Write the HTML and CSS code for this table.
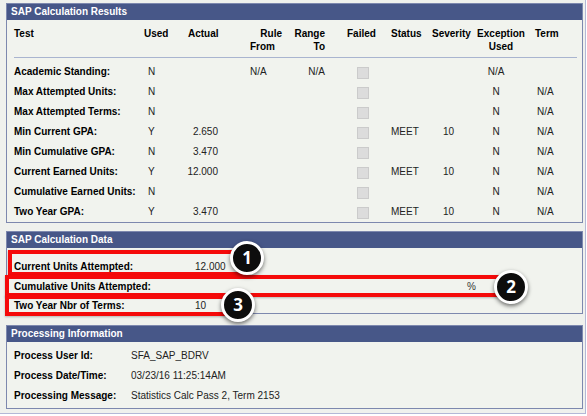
FILE: index.html
```html
<!DOCTYPE html>
<html>
<head>
<meta charset="utf-8">
<link rel="stylesheet" href="styles.css">
</head>
<body>
<div class="page">
  <section class="panel results">
    <div class="panel-head">SAP Calculation Results</div>
    <div class="grid head-row">
      <div class="c-test">Test</div>
      <div class="c-used">Used</div>
      <div class="c-actual">Actual</div>
      <div class="c-rule"><div class="rule1">Rule</div><div class="rule2">From</div></div>
      <div class="c-range">Range<br>To</div>
      <div class="c-failed">Failed</div>
      <div class="c-status">Status</div>
      <div class="c-sev">Severity</div>
      <div class="c-exc">Exception<br>Used</div>
      <div class="c-term">Term</div>
    </div>
    <div class="rows">
      <div class="grid row">
        <div class="c-test lbl">Academic Standing:</div>
        <div class="c-used v">N</div>
        <div class="c-actual v"></div>
        <div class="c-rule v">N/A</div>
        <div class="c-range v">N/A</div>
        <div class="c-failed"><span class="cb"></span></div>
        <div class="c-status v"></div>
        <div class="c-sev v"></div>
        <div class="c-exc v">N/A</div>
        <div class="c-term v"></div>
      </div>
      <div class="grid row">
        <div class="c-test lbl">Max Attempted Units:</div>
        <div class="c-used v">N</div>
        <div class="c-actual v"></div>
        <div class="c-rule v"></div>
        <div class="c-range v"></div>
        <div class="c-failed"><span class="cb"></span></div>
        <div class="c-status v"></div>
        <div class="c-sev v"></div>
        <div class="c-exc v">N</div>
        <div class="c-term v">N/A</div>
      </div>
      <div class="grid row">
        <div class="c-test lbl">Max Attempted Terms:</div>
        <div class="c-used v">N</div>
        <div class="c-actual v"></div>
        <div class="c-rule v"></div>
        <div class="c-range v"></div>
        <div class="c-failed"><span class="cb"></span></div>
        <div class="c-status v"></div>
        <div class="c-sev v"></div>
        <div class="c-exc v">N</div>
        <div class="c-term v">N/A</div>
      </div>
      <div class="grid row">
        <div class="c-test lbl">Min Current GPA:</div>
        <div class="c-used v">Y</div>
        <div class="c-actual v">2.650</div>
        <div class="c-rule v"></div>
        <div class="c-range v"></div>
        <div class="c-failed"><span class="cb"></span></div>
        <div class="c-status v">MEET</div>
        <div class="c-sev v">10</div>
        <div class="c-exc v">N</div>
        <div class="c-term v">N/A</div>
      </div>
      <div class="grid row">
        <div class="c-test lbl">Min Cumulative GPA:</div>
        <div class="c-used v">N</div>
        <div class="c-actual v">3.470</div>
        <div class="c-rule v"></div>
        <div class="c-range v"></div>
        <div class="c-failed"><span class="cb"></span></div>
        <div class="c-status v"></div>
        <div class="c-sev v"></div>
        <div class="c-exc v">N</div>
        <div class="c-term v">N/A</div>
      </div>
      <div class="grid row">
        <div class="c-test lbl">Current Earned Units:</div>
        <div class="c-used v">Y</div>
        <div class="c-actual v">12.000</div>
        <div class="c-rule v"></div>
        <div class="c-range v"></div>
        <div class="c-failed"><span class="cb"></span></div>
        <div class="c-status v">MEET</div>
        <div class="c-sev v">10</div>
        <div class="c-exc v">N</div>
        <div class="c-term v">N/A</div>
      </div>
      <div class="grid row">
        <div class="c-test lbl">Cumulative Earned Units:</div>
        <div class="c-used v">N</div>
        <div class="c-actual v"></div>
        <div class="c-rule v"></div>
        <div class="c-range v"></div>
        <div class="c-failed"><span class="cb"></span></div>
        <div class="c-status v"></div>
        <div class="c-sev v"></div>
        <div class="c-exc v">N</div>
        <div class="c-term v">N/A</div>
      </div>
      <div class="grid row">
        <div class="c-test lbl">Two Year GPA:</div>
        <div class="c-used v">Y</div>
        <div class="c-actual v">3.470</div>
        <div class="c-rule v"></div>
        <div class="c-range v"></div>
        <div class="c-failed"><span class="cb"></span></div>
        <div class="c-status v">MEET</div>
        <div class="c-sev v">10</div>
        <div class="c-exc v">N</div>
        <div class="c-term v">N/A</div>
      </div>
    </div>
  </section>

  <section class="panel data">
    <div class="panel-head">SAP Calculation Data</div>
    <div class="data-body">
      <div class="drow"><div class="dlbl">Current Units Attempted:</div><div class="dval">12.000</div></div>
      <div class="drow"><div class="dlbl">Cumulative Units Attempted:</div><div class="dval"></div><div class="dpct">%</div></div>
      <div class="drow"><div class="dlbl">Two Year Nbr of Terms:</div><div class="dval">10</div></div>
    </div>
    <div class="box box1"></div>
    <div class="box box2"></div>
    <div class="box box3"></div>
    <div class="badge b1">1</div>
    <div class="badge b2">2</div>
    <div class="badge b3">3</div>
  </section>

  <section class="panel proc">
    <div class="panel-head">Processing Information</div>
    <div class="proc-body">
      <div class="prow"><div class="plbl">Process User Id:</div><div class="pval">SFA_SAP_BDRV</div></div>
      <div class="prow"><div class="plbl">Process Date/Time:</div><div class="pval">03/23/16 11:25:14AM</div></div>
      <div class="prow"><div class="plbl">Processing Message:</div><div class="pval">Statistics Calc Pass 2, Term 2153</div></div>
    </div>
  </section>
</div>
</body>
</html>
```

FILE: styles.css
```css
html, body {
  margin: 0;
  padding: 0;
  background: #ffffff;
}
body {
  font-family: "Liberation Sans", Arial, sans-serif;
  font-size: 10px;
  color: #000;
}
.page {
  width: 579px;
  height: 410px;
  padding: 3px 0 0 6px;
  background: #eff1ed;
  border-right: 1px solid #b3b8d6;
  border-bottom: 1px solid #b3b8d6;
}
.panel {
  position: relative;
  width: 575px;
  background: #f1f3ee;
  border: 1px solid #7d88ae;
}
.panel-head {
  height: 16px;
  line-height: 16px;
  background: #475788;
  color: #fff;
  font-weight: bold;
  font-size: 10px;
  padding-left: 4px;
}
.grid {
  display: grid;
  grid-template-columns: 126px 40px 50px 60px 45px 50px 40px 47px 58px 1fr;
}
.head-row {
  margin: 0 5px 0 7px;
  padding: 7px 0 4px 0;
  line-height: 13px;
  font-weight: bold;
  border-bottom: 1px solid #a9b4cf;
}
.rows {
  margin-top: 4px;
  padding-left: 7px;
}
.row {
  height: 20px;
  line-height: 20px;
  align-items: center;
}
.lbl { font-weight: bold; }
.v { color: #222; }

.head-row .c-used { padding-left: 4px; }
.row .c-used { padding-left: 8px; }
.head-row .c-actual { padding-left: 8px; }
.row .c-actual { text-align: right; padding-right: 12px; }
.rule1 { text-align: right; padding-right: 8px; }
.rule2 { padding-left: 20px; }
.row .c-rule { padding-left: 20px; }
.c-range { text-align: right; padding-right: 10px; }
.head-row .c-failed { padding-left: 12px; }
.row .c-failed { padding-left: 22px; display: flex; align-items: center; height: 20px; }
.cb {
  display: block;
  width: 10px;
  height: 10px;
  margin-top: 2px;
  background: #dcdcdc;
  border: 1px solid #cbcbcb;
}
.c-status { padding-left: 6px; }
.head-row .c-sev { padding-left: 7px; }
.row .c-sev { padding-left: 18px; }
.head-row .c-exc { text-align: center; }
.row .c-exc { text-align: center; padding-right: 10px; }
.head-row .c-term { padding-left: 5px; }
.row .c-term { padding-left: 7px; }

.data-body {
  padding: 12px 0 0 7px;
  display: flex;
  flex-direction: column;
  gap: 5.5px;
}
.drow {
  display: flex;
  height: 14px;
  line-height: 14px;
}
.dlbl { width: 181px; font-weight: bold; }
.dval { width: 272px; color: #222; }
.dpct { color: #333; }

.proc-body {
  padding: 7px 0 5px 7px;
  display: flex;
  flex-direction: column;
  gap: 6px;
}
.prow {
  display: flex;
  height: 14px;
  line-height: 14px;
}
.plbl { width: 117px; font-weight: bold; }
.pval { color: #222; }

.data { margin-top: 8px; }
.proc { margin-top: 11px; }

.box {
  position: absolute;
  border: 4px solid #f50a0a;
  box-shadow: 0 1px 2px rgba(0,0,0,0.25);
}
.box1 { left: 1px; top: 18px; width: 230px; height: 18px; }
.box2 { left: -2px; top: 43px; width: 494px; height: 14px; }
.box3 { left: -2px; top: 63px; width: 220px; height: 13px; }

.badge {
  position: absolute;
  width: 28px;
  height: 28px;
  line-height: 28px;
  border-radius: 50%;
  background: #0d0d0d;
  border: 3px solid #fff;
  box-shadow: 0 2px 4px rgba(0,0,0,0.55);
  color: #fff;
  font-family: "Open Sans", "Liberation Sans", sans-serif;
  font-weight: bold;
  font-size: 17px;
  text-align: center;
}
.b1 { left: 223px; top: 9px; }
.b2 { left: 487px; top: 38px; }
.b3 { left: 214px; top: 56px; }
```
